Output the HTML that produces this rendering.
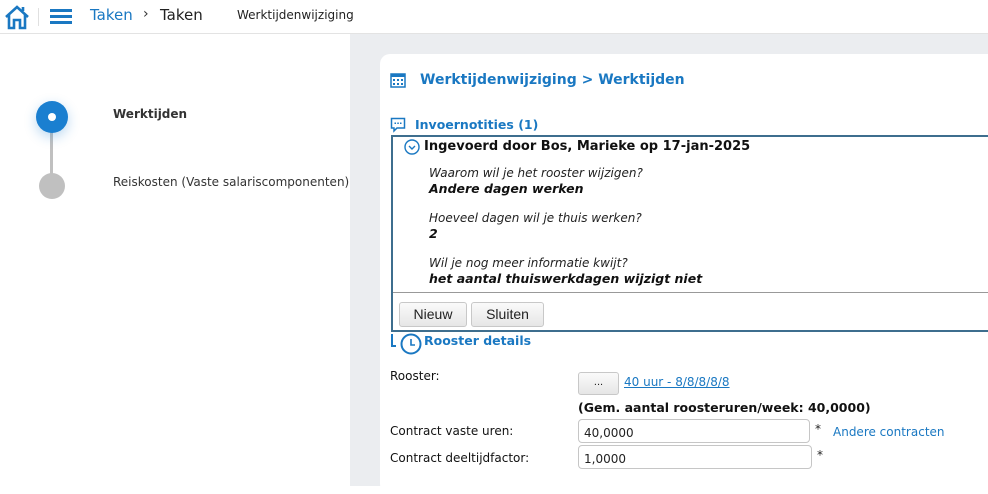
<!DOCTYPE html>
<html><head><meta charset="utf-8"><style>
*{margin:0;padding:0;box-sizing:border-box}
body{width:988px;height:486px;overflow:hidden;background:#fff;font-family:"DejaVu Sans","Liberation Sans",sans-serif;position:relative;color:#222}
.a{position:absolute;white-space:nowrap}
.top{position:absolute;left:0;top:0;width:988px;height:34px;border-bottom:1px solid #e3e3e3;background:#fff}
.gray{position:absolute;left:350px;top:34px;width:638px;height:452px;background:#ebedf0}
.card{position:absolute;left:380px;top:54px;width:620px;height:440px;background:#fff;border-radius:10px}
.blue{color:#1a78c2}
.btn{position:absolute;background:linear-gradient(#fafafa,#e6e6e6);border:1px solid #c8c8c8;border-radius:3px;font-family:"Liberation Sans",sans-serif;font-size:14px;text-align:center;color:#222}
.inp{position:absolute;border:1px solid #c6c6c6;border-radius:4px;font-size:12px;padding:6px 0 0 5px;height:24px;background:#fff}
.lbl{font-size:12px;color:#111}
</style></head><body>
<div class="top">
<svg class="a" style="left:4px;top:4px" width="26" height="26" viewBox="0 0 26 26" fill="none" stroke="#1a78c2" stroke-width="2.6"><path d="M2 13 L13 3 L24 13"/><path d="M5 11 V24 H10 V16 H16 V24 H21 V11"/><path d="M19 3 V7"/></svg>
<div class="a" style="left:38px;top:8px;width:1px;height:18px;background:#e0e0e0"></div>
<div class="a" style="left:50px;top:9px;width:22px;height:3px;background:#1a78c2"></div>
<div class="a" style="left:50px;top:15px;width:22px;height:3px;background:#1a78c2"></div>
<div class="a" style="left:50px;top:21px;width:22px;height:3px;background:#1a78c2"></div>
<div class="a" style="left:90px;top:6px;font-size:15px;color:#1a78c2">Taken</div>
<div class="a" style="left:143px;top:6px;font-size:14px;color:#333">›</div>
<div class="a" style="left:160px;top:6px;font-size:15px;color:#222">Taken</div>
<div class="a" style="left:237px;top:8px;font-size:12px;color:#222">Werktijdenwijziging</div>
</div>
<div class="a" style="left:50px;top:116px;width:3px;height:70px;background:#c0c0c0"></div>
<div class="a" style="left:36px;top:101px;width:32px;height:32px;border-radius:50%;background:#1a7fd0;box-shadow:0 4px 12px rgba(26,127,208,.3)"></div>
<div class="a" style="left:48px;top:113px;width:8px;height:8px;border-radius:50%;background:#fff"></div>
<div class="a" style="left:39px;top:173px;width:26px;height:26px;border-radius:50%;background:#c0c0c0"></div>
<div class="a" style="left:113px;top:107px;font-size:12px;font-weight:bold;color:#333">Werktijden</div>
<div class="a" style="left:113px;top:175px;font-size:12px;color:#333">Reiskosten (Vaste salariscomponenten)</div>
<div class="gray"></div>
<div class="card"></div>
<svg class="a" style="left:390px;top:72px" width="16" height="16" viewBox="0 0 16 16"><rect x="1" y="2" width="14" height="13" fill="none" stroke="#1a78c2" stroke-width="1.5"/><rect x="1" y="2" width="14" height="3" fill="#1a78c2"/><g fill="#1a78c2"><rect x="3" y="7" width="2" height="2"/><rect x="7" y="7" width="2" height="2"/><rect x="11" y="7" width="2" height="2"/><rect x="3" y="11" width="2" height="2"/><rect x="7" y="11" width="2" height="2"/><rect x="11" y="11" width="2" height="2"/></g></svg>
<div class="a blue" style="left:420px;top:72px;font-size:14px;font-weight:bold">Werktijdenwijziging &gt; Werktijden</div>
<svg class="a" style="left:390px;top:117px" width="16" height="16" viewBox="0 0 16 16" fill="none" stroke="#1a78c2" stroke-width="1.5"><path d="M1.5 1.5 H14.5 V11 H7 L4 14 V11 H1.5 Z"/><g fill="#1a78c2" stroke="none"><rect x="4.5" y="5.5" width="1.5" height="1.5"/><rect x="7.3" y="5.5" width="1.5" height="1.5"/><rect x="10" y="5.5" width="1.5" height="1.5"/></g></svg>
<div class="a blue" style="left:415px;top:117px;font-size:12.5px;font-weight:bold">Invoernotities (1)</div>
<div class="a" style="left:391px;top:135px;width:610px;height:197px;border:2px solid #3e6e8e"></div>
<svg class="a" style="left:404px;top:139px" width="16" height="16" viewBox="0 0 16 16" fill="none" stroke="#1a78c2" stroke-width="1.4"><circle cx="8" cy="8" r="7"/><path d="M5 7 L8 10 L11 7"/></svg>
<div class="a" style="left:424px;top:139px;font-size:13px;font-weight:bold;color:#111">Ingevoerd door Bos, Marieke op 17-jan-2025</div>
<div class="a" style="left:429px;top:166px;font-size:12px;font-style:italic;color:#222">Waarom wil je het rooster wijzigen?</div>
<div class="a" style="left:429px;top:181px;font-size:12.5px;font-style:italic;font-weight:bold;color:#111">Andere dagen werken</div>
<div class="a" style="left:429px;top:211px;font-size:12px;font-style:italic;color:#222">Hoeveel dagen wil je thuis werken?</div>
<div class="a" style="left:429px;top:226px;font-size:12.5px;font-style:italic;font-weight:bold;color:#111">2</div>
<div class="a" style="left:429px;top:256px;font-size:12px;font-style:italic;color:#222">Wil je nog meer informatie kwijt?</div>
<div class="a" style="left:429px;top:271px;font-size:12.5px;font-style:italic;font-weight:bold;color:#111">het aantal thuiswerkdagen wijzigt niet</div>
<div class="a" style="left:393px;top:292px;width:600px;height:1px;background:#999"></div>
<div class="btn" style="left:399px;top:302px;width:68px;height:25px;line-height:23px">Nieuw</div>
<div class="btn" style="left:471px;top:302px;width:73px;height:25px;line-height:23px">Sluiten</div>
<svg class="a" style="left:390px;top:333px" width="34" height="22" viewBox="0 0 34 22" fill="none" stroke="#1a78c2" stroke-width="2"><path d="M2 1 V13 H6"/><circle cx="21" cy="11" r="9.5" fill="#fff"/><path d="M21 6 V12 H25" stroke-width="1.6"/></svg>
<div class="a blue" style="left:424px;top:333px;font-size:12.5px;font-weight:bold">Rooster details</div>
<div class="a lbl" style="left:390px;top:369px">Rooster:</div>
<div class="btn" style="left:578px;top:372px;width:41px;height:23px;font-size:11px;line-height:18px">...</div>
<div class="a" style="left:624px;top:375px;font-size:12px;color:#1a78c2;text-decoration:underline">40 uur - 8/8/8/8/8</div>
<div class="a" style="left:578px;top:400px;font-size:12.5px;font-weight:bold;color:#111">(Gem. aantal roosteruren/week: 40,0000)</div>
<div class="a lbl" style="left:390px;top:424px">Contract vaste uren:</div>
<div class="inp" style="left:578px;top:419px;width:232px">40,0000</div>
<div class="a" style="left:815px;top:422px;font-size:12px">*</div>
<div class="a" style="left:833px;top:425px;font-size:12px;color:#1a78c2">Andere contracten</div>
<div class="a lbl" style="left:390px;top:451px">Contract deeltijdfactor:</div>
<div class="inp" style="left:578px;top:445px;width:234px">1,0000</div>
<div class="a" style="left:817px;top:448px;font-size:12px">*</div>
</body></html>
